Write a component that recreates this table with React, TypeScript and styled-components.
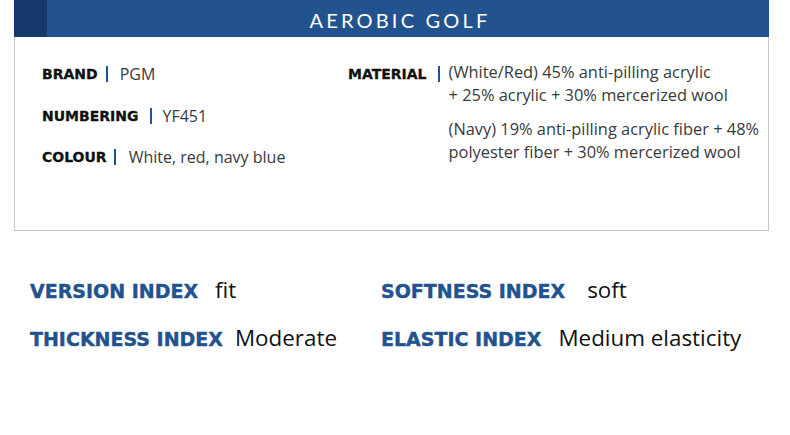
import React from "react";
import styled, { createGlobalStyle } from "styled-components";

const Global = createGlobalStyle`
  html, body { margin: 0; padding: 0; background: #fff; }
  body { width: 790px; height: 435px; overflow: hidden; font-family: "Open Sans", sans-serif; }
`;

const Page = styled.div`
  width: 790px;
  height: 435px;
  display: flex;
  flex-direction: column;
`;

const Panel = styled.div`
  margin: 0 21px 0 14px;
  display: flex;
  flex-direction: column;
`;

const Header = styled.div`
  height: 37px;
  background: #22538f;
  display: flex;
  align-items: stretch;
`;

const HeaderTab = styled.div`
  width: 33px;
  background: #15396b;
`;

const Title = styled.div`
  flex: 1;
  display: flex;
  align-items: center;
  justify-content: center;
  padding-right: 16px;
  color: #fff;
  font-family: Lato, "Open Sans", sans-serif;
  font-size: 20px;
  letter-spacing: 3.2px;
  padding-top: 2px;
`;

const Card = styled.div`
  height: 194px;
  border: 1px solid #c8c8c8;
  border-top: none;
  display: flex;
  padding: 26px 0 0 27px;
  box-sizing: border-box;
`;

const Column = styled.div<{ $width?: number }>`
  display: flex;
  flex-direction: column;
  gap: 19.5px;
  width: ${(p) => (p.$width ? `${p.$width}px` : "auto")};
`;

const Row = styled.div`
  display: flex;
  align-items: flex-start;
  height: 22px;
`;

const Label = styled.span`
  font-family: "DejaVu Sans", sans-serif;
  font-weight: 700;
  font-size: 14px;
  color: #111;
  line-height: 22px;
  -webkit-text-stroke: 0.3px #111;
`;

const Bar = styled.span<{ $gap: number; $after: number }>`
  width: 2px;
  height: 16px;
  background: #22538f;
  margin: 3px ${(p) => p.$after}px 0 ${(p) => p.$gap}px;
  flex-shrink: 0;
`;

const Value = styled.span`
  font-family: "Open Sans", sans-serif;
  font-size: 16px;
  color: #3a3a3a;
  line-height: 22px;
`;

const MaterialText = styled.div`
  display: flex;
  flex-direction: column;
  gap: 11px;
  margin-top: -3px;
`;

const Para = styled.div`
  font-family: "Open Sans", sans-serif;
  font-size: 16.4px;
  color: #3a3a3a;
  line-height: 23px;
`;

const Indexes = styled.div`
  display: grid;
  grid-template-columns: 351px auto;
  row-gap: 22px;
  padding: 43px 0 0 30px;
`;

const IndexItem = styled.div<{ $gap: number }>`
  display: flex;
  align-items: baseline;
  gap: ${(p) => p.$gap}px;
  height: 26px;
`;

const IndexLabel = styled.span`
  font-family: "DejaVu Sans", sans-serif;
  font-weight: 700;
  font-size: 19px;
  color: #22538f;
  -webkit-text-stroke: 0.4px #22538f;
`;

const IndexValue = styled.span`
  font-family: "Open Sans", sans-serif;
  font-size: 22.4px;
  color: #111;
`;

const specsLeft = [
  { label: "BRAND", value: "PGM", gap: 8, after: 12 },
  { label: "NUMBERING", value: "YF451", gap: 12, after: 10 },
  { label: "COLOUR", value: "White, red, navy blue", gap: 7, after: 13 },
];

const indexes = [
  { label: "VERSION INDEX", value: "fit", gap: 17 },
  { label: "SOFTNESS INDEX", value: "soft", gap: 22 },
  { label: "THICKNESS INDEX", value: "Moderate", gap: 12 },
  { label: "ELASTIC INDEX", value: "Medium elasticity", gap: 17 },
];

export default function App() {
  return (
    <Page>
      <Global />
      <Panel>
        <Header>
          <HeaderTab />
          <Title>AEROBIC GOLF</Title>
        </Header>
        <Card>
          <Column $width={306}>
            {specsLeft.map((s) => (
              <Row key={s.label}>
                <Label>{s.label}</Label>
                <Bar $gap={s.gap} $after={s.after} />
                <Value>{s.value}</Value>
              </Row>
            ))}
          </Column>
          <Column>
            <Row>
              <Label>MATERIAL</Label>
              <Bar $gap={11} $after={9} />
              <MaterialText>
                <Para>
                  (White/Red) 45% anti-pilling acrylic
                  <br />+ 25% acrylic + 30% mercerized wool
                </Para>
                <Para>
                  (Navy) 19% anti-pilling acrylic fiber + 48%
                  <br />
                  polyester fiber + 30% mercerized wool
                </Para>
              </MaterialText>
            </Row>
          </Column>
        </Card>
      </Panel>
      <Indexes>
        {indexes.map((i) => (
          <IndexItem key={i.label} $gap={i.gap}>
            <IndexLabel>{i.label}</IndexLabel>
            <IndexValue>{i.value}</IndexValue>
          </IndexItem>
        ))}
      </Indexes>
    </Page>
  );
}
